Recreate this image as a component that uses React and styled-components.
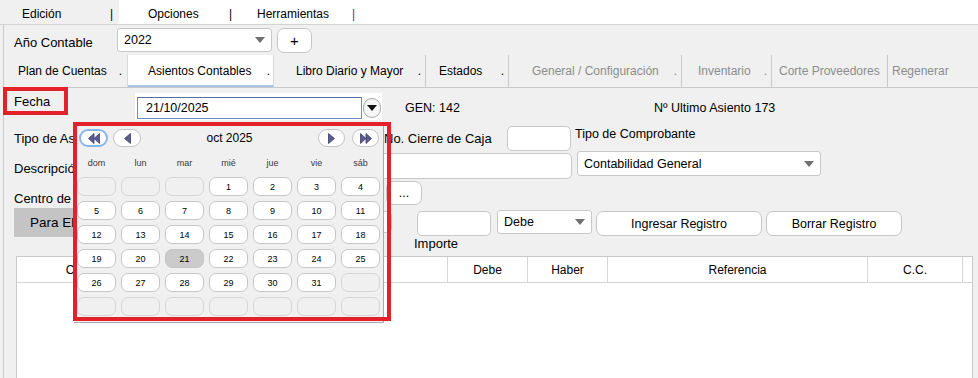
import React from "react";
import styled, { createGlobalStyle } from "styled-components";

const GlobalStyle = createGlobalStyle`
  html, body { margin: 0; padding: 0; background: #fff; }
  body { font-family: "Liberation Sans", Arial, sans-serif; font-size: 13px; color: #000; }
  * { box-sizing: border-box; }
`;

const weekDays = ["dom", "lun", "mar", "mié", "jue", "vie", "sáb"];

const tabs = [
  { title: "Plan de Cuentas", w: 123, pl: 14, pr: 5, dot: true },
  { title: "Asientos Contables", w: 147, pl: 20, pr: 3, dot: true, active: true },
  { title: "Libro Diario y Mayor", w: 152, pl: 22, pr: 4, dot: true, sep: true },
  { title: "Estados", w: 83, pl: 13, pr: 4, dot: true, sep: true },
  { title: "General / Configuración", w: 173, pl: 23, pr: 4, dot: true, sep: true, off: true },
  { title: "Inventario", w: 90, pl: 16, pr: 4, dot: true, sep: true, off: true },
  { title: "Corte Proveedores", w: 116, pl: 7, pr: 0, sep: true, off: true },
  { title: "Regenerar", w: 80, pl: 4, pr: 0, off: true },
];

const columns = [
  { title: "Cuenta", w: 137 },
  { title: "Nombre de la Cuenta", w: 294 },
  { title: "Debe", w: 80 },
  { title: "Haber", w: 80 },
  { title: "Referencia", w: 260 },
  { title: "C.C.", w: 95 },
  { title: "", w: 9, last: true },
];

const buildDays = () => {
  const cells = [];
  for (let i = 0; i < 3; i++) cells.push(null);
  for (let d = 1; d <= 31; d++) cells.push(d);
  while (cells.length < 42) cells.push(null);
  return cells;
};

const ArrowIcon = ({ dir, double }) => {
  const left = dir === "left";
  return (
    <svg width={double ? 12 : 7} height="11" viewBox={double ? "0 0 12 11" : "0 0 7 11"}>
      {double ? (
        left ? (
          <>
            <polygon points="6,0.5 0.5,5.5 6,10.5" fill="#5c5c92" stroke="#3c3c6c" strokeWidth="0.8" />
            <polygon points="11.5,0.5 6,5.5 11.5,10.5" fill="#5c5c92" stroke="#3c3c6c" strokeWidth="0.8" />
          </>
        ) : (
          <>
            <polygon points="0.5,0.5 6,5.5 0.5,10.5" fill="#5c5c92" stroke="#3c3c6c" strokeWidth="0.8" />
            <polygon points="6,0.5 11.5,5.5 6,10.5" fill="#5c5c92" stroke="#3c3c6c" strokeWidth="0.8" />
          </>
        )
      ) : left ? (
        <polygon points="6.5,0.5 0.5,5.5 6.5,10.5" fill="#5c5c92" stroke="#3c3c6c" strokeWidth="0.8" />
      ) : (
        <polygon points="0.5,0.5 6.5,5.5 0.5,10.5" fill="#5c5c92" stroke="#3c3c6c" strokeWidth="0.8" />
      )}
    </svg>
  );
};

const App = () => {
  const days = buildDays();
  return (
    <Page>
      <GlobalStyle />
      <MenuBar>
        <MenuItem $w={119} $pl={22} $pr={6} $active>
          <span>Edición</span>
          <MenuSep>|</MenuSep>
        </MenuItem>
        <MenuItem $w={115} $pl={29} $pr={2}>
          <span>Opciones</span>
          <MenuSep>|</MenuSep>
        </MenuItem>
        <MenuItem $w={123} $pl={23} $pr={2}>
          <span>Herramientas</span>
          <MenuSep $purple>|</MenuSep>
        </MenuItem>
      </MenuBar>

      <Main>
        <Content>
          <Row $h={30} $center>
            <Label $w={103} $mt={5}>Año Contable</Label>
            <Select $w={155} $h={24}>
              <span>2022</span>
              <Caret />
            </Select>
            <Button $w={35} $h={25} $ml={5} $size={15}>+</Button>
          </Row>

          <TabRow>
            {tabs.map((t) => (
              <Tab key={t.title} $w={t.w} $pl={t.pl} $pr={t.pr} $active={t.active} $sep={t.sep} $off={t.off}>
                <span>{t.title}</span>
                {t.dot && <span>.</span>}
              </Tab>
            ))}
          </TabRow>

          <Row $h={34}>
            <Label $w={121} $mt={6}>Fecha</Label>
            <DateBox>
              <DateInput>21/10/2025</DateInput>
              <DropCircle>
                <BlackCaret />
              </DropCircle>
            </DateBox>
            <Info $w={249} $ml={23} $mt={13}>GEN: 142</Info>
            <Info $mt={13}>Nº Ultimo Asiento 173</Info>
          </Row>

          <Row $h={30}>
            <Label $w={370} $mt={9}>Tipo de Asiento</Label>
            <Label $w={123} $mt={9}>No. Cierre de Caja</Label>
            <Field $w={64} $h={25} $mt={4} />
            <Info $ml={4} $mt={5}>Tipo de Comprobante</Info>
          </Row>

          <Row $h={28}>
            <Label $w={121} $mt={9}>Descripción</Label>
            <Field $w={437} $h={26} $mt={1} />
            <Select $w={244} $h={25} $ml={5} $mt={-1}>
              <span>Contabilidad General</span>
              <Caret />
            </Select>
          </Row>

          <Row $h={27}>
            <Label $w={372} $mt={11}>Centro de Costo</Label>
            <Button $w={36} $h={24} $mt={1}>...</Button>
          </Row>

          <Row $h={49}>
            <GrayButton>Para Elegir Cuenta</GrayButton>
            <Field $w={222} $h={22} $ml={6} $mt={4} />
            <ImporteCol>
              <Field $w={74} $h={25} />
              <SubLabel>Importe</SubLabel>
            </ImporteCol>
            <Select $w={95} $h={24} $ml={6} $mt={3}>
              <span>Debe</span>
              <Caret />
            </Select>
            <Button $w={166} $h={25} $ml={4} $mt={4}>Ingresar Registro</Button>
            <Button $w={136} $h={25} $ml={4} $mt={4}>Borrar Registro</Button>
          </Row>

          <Table>
            <HeaderRow>
              {columns.map((c, i) => (
                <HeaderCell key={i} $w={c.w} $last={c.last}>{c.title}</HeaderCell>
              ))}
            </HeaderRow>
          </Table>
        </Content>
      </Main>

      <Popup>
        <NavRow>
          <NavButton $w={29} $focus>
            <ArrowIcon dir="left" double />
          </NavButton>
          <NavButton $w={28} $ml={5}>
            <ArrowIcon dir="left" />
          </NavButton>
          <MonthTitle>oct 2025</MonthTitle>
          <NavButton $w={27}>
            <ArrowIcon dir="right" />
          </NavButton>
          <NavButton $w={27} $ml={7}>
            <ArrowIcon dir="right" double />
          </NavButton>
        </NavRow>
        <DayNames>
          {weekDays.map((d) => (
            <span key={d}>{d}</span>
          ))}
        </DayNames>
        <DayGrid>
          {days.map((d, i) => (
            <DayCell key={i} $empty={d === null} $selected={d === 21}>
              {d}
            </DayCell>
          ))}
        </DayGrid>
      </Popup>

      <Highlight $x={3} $y={87} $w={65} $h={28} />
      <Highlight $x={73} $y={122} $w={318} $h={199} />
    </Page>
  );
};

const Page = styled.div`
  position: relative;
  width: 978px;
  height: 378px;
  overflow: hidden;
  display: flex;
  flex-direction: column;
  background: #fff;
`;

const MenuBar = styled.div`
  display: flex;
  height: 25px;
  flex-shrink: 0;
  border-bottom: 1px solid #d3d3d3;
  background: #fff;
  font-size: 12px;
`;

const MenuItem = styled.div`
  display: flex;
  align-items: center;
  justify-content: space-between;
  width: ${(p) => p.$w}px;
  padding-top: 4px;
  padding-left: ${(p) => p.$pl}px;
  padding-right: ${(p) => p.$pr}px;
  background: ${(p) => (p.$active ? "#f0f0f0" : "transparent")};
`;

const MenuSep = styled.span`
  color: ${(p) => (p.$purple ? "#7a1a8a" : "#000")};
`;

const Main = styled.div`
  flex: 1;
  display: flex;
  background: #f0f0f0;
  padding-left: 3px;
  min-height: 0;
`;

const Content = styled.div`
  flex: 1;
  display: flex;
  flex-direction: column;
  border-left: 1px solid #c9c9c9;
  min-width: 0;
`;

const Row = styled.div`
  display: flex;
  align-items: ${(p) => (p.$center ? "center" : "flex-start")};
  height: ${(p) => p.$h}px;
  flex-shrink: 0;
  padding-left: 10px;
`;

const Label = styled.span`
  width: ${(p) => p.$w}px;
  margin-top: ${(p) => p.$mt || 0}px;
  font-size: 13px;
  line-height: 15px;
  white-space: nowrap;
  flex-shrink: 0;
`;

const Info = styled.span`
  width: ${(p) => (p.$w ? `${p.$w}px` : "auto")};
  margin-left: ${(p) => p.$ml || 0}px;
  margin-top: ${(p) => p.$mt || 0}px;
  font-size: 12.5px;
  line-height: 15px;
  white-space: nowrap;
  flex-shrink: 0;
`;

const Field = styled.div`
  width: ${(p) => p.$w}px;
  height: ${(p) => p.$h}px;
  margin-left: ${(p) => p.$ml || 0}px;
  margin-top: ${(p) => p.$mt || 0}px;
  background: #fff;
  border: 1px solid #c8c8c8;
  border-radius: 5px;
  flex-shrink: 0;
`;

const Select = styled.div`
  display: flex;
  align-items: center;
  justify-content: space-between;
  width: ${(p) => p.$w}px;
  height: ${(p) => p.$h}px;
  margin-left: ${(p) => p.$ml || 0}px;
  margin-top: ${(p) => p.$mt || 0}px;
  padding: 0 6px 0 6px;
  background: #fff;
  border: 1px solid #c8c8c8;
  border-radius: 3px;
  font-size: 12.5px;
  flex-shrink: 0;
`;

const Caret = styled.span`
  width: 0;
  height: 0;
  border-left: 5px solid transparent;
  border-right: 5px solid transparent;
  border-top: 6px solid #707070;
`;

const BlackCaret = styled(Caret)`
  border-top: 6px solid #111;
`;

const Button = styled.button`
  width: ${(p) => p.$w}px;
  height: ${(p) => p.$h}px;
  margin-left: ${(p) => p.$ml || 0}px;
  margin-top: ${(p) => p.$mt || 0}px;
  padding: 0;
  background: #fff;
  border: 1px solid #c6c6c6;
  border-radius: 7px;
  font-family: "Liberation Sans", Arial, sans-serif;
  font-size: ${(p) => p.$size || 12.5}px;
  color: #000;
  flex-shrink: 0;
`;

const TabRow = styled.div`
  display: flex;
  height: 33px;
  flex-shrink: 0;
  border-bottom: 1px solid #c9c9c9;
`;

const Tab = styled.div`
  display: flex;
  align-items: center;
  justify-content: space-between;
  width: ${(p) => p.$w}px;
  padding-left: ${(p) => p.$pl}px;
  padding-right: ${(p) => p.$pr}px;
  font-size: 12px;
  white-space: nowrap;
  flex-shrink: 0;
  color: ${(p) => (p.$off ? "#8c8c8c" : "#000")};
  background: ${(p) => (p.$active ? "#fff" : "transparent")};
  border-left: ${(p) => (p.$active ? "1px solid #d9d9d9" : "none")};
  border-right: ${(p) => (p.$active ? "1px solid #d9d9d9" : p.$sep ? "1px solid #c9c9c9" : "none")};
  box-shadow: ${(p) => (p.$active ? "inset 0 -2px 0 #a7c6e6" : "none")};
`;

const DateBox = styled.div`
  display: flex;
  align-items: flex-start;
  width: 247px;
  height: 27px;
  margin-top: 5px;
  padding: 4px 0 0 2px;
  background: #fff;
  flex-shrink: 0;
`;

const DateInput = styled.div`
  display: flex;
  align-items: center;
  width: 225px;
  height: 22px;
  padding-left: 8px;
  border: 1px solid #6f8fc4;
  border-top-color: #55709e;
  font-size: 12.5px;
`;

const DropCircle = styled.div`
  display: flex;
  align-items: center;
  justify-content: center;
  width: 18px;
  height: 20px;
  margin: 1px 0 0 1px;
  border: 1px solid #a9a9a9;
  border-radius: 10px;
  background: #f6f6f6;
`;

const GrayButton = styled.div`
  display: flex;
  align-items: center;
  width: 150px;
  height: 29px;
  margin-top: 1px;
  padding-left: 16px;
  background: #c4c4c4;
  font-size: 13.5px;
  white-space: nowrap;
  flex-shrink: 0;
`;

const ImporteCol = styled.div`
  display: flex;
  flex-direction: column;
  margin: 4px 0 0 25px;
  flex-shrink: 0;
`;

const SubLabel = styled.span`
  margin: 1px 0 0 -3px;
  font-size: 13px;
  line-height: 14px;
`;

const Table = styled.div`
  flex: 1;
  width: 957px;
  margin-left: 12px;
  background: #fff;
  border: 1px solid #c9c9c9;
  border-bottom: none;
`;

const HeaderRow = styled.div`
  display: flex;
  height: 26px;
  border-bottom: 1px solid #d6d6d6;
`;

const HeaderCell = styled.div`
  display: flex;
  align-items: center;
  justify-content: center;
  width: ${(p) => p.$w}px;
  flex-shrink: 0;
  border-right: ${(p) => (p.$last ? "none" : "1px solid #d6d6d6")};
  font-size: 12px;
  white-space: nowrap;
  overflow: hidden;
`;

const Popup = styled.div`
  position: absolute;
  left: 74px;
  top: 122px;
  width: 310px;
  height: 201px;
  padding: 7px 0 0 3px;
  background: #f0f0f0;
  border-right: 1px solid #a9a9a9;
  border-bottom: 1px solid #a9a9a9;
`;

const NavRow = styled.div`
  display: flex;
  align-items: center;
  height: 18px;
  padding: 0 4px 0 2px;
`;

const NavButton = styled.div`
  display: flex;
  align-items: center;
  justify-content: center;
  width: ${(p) => p.$w}px;
  height: 18px;
  margin-left: ${(p) => p.$ml || 0}px;
  background: #fff;
  border: ${(p) => (p.$focus ? "2px solid #8ab6e6" : "1px solid #c4c4c4")};
  border-radius: 9px;
  flex-shrink: 0;
`;

const MonthTitle = styled.span`
  flex: 1;
  text-align: center;
  font-size: 12px;
`;

const DayNames = styled.div`
  display: grid;
  grid-template-columns: repeat(7, 39px);
  column-gap: 5px;
  height: 16px;
  margin-top: 8px;
  align-items: center;
  font-size: 9px;
  color: #3a3a3a;
  text-align: center;
`;

const DayGrid = styled.div`
  display: grid;
  grid-template-columns: repeat(7, 39px);
  grid-auto-rows: 19px;
  gap: 5px;
  margin-top: 6px;
`;

const DayCell = styled.div`
  display: flex;
  align-items: center;
  justify-content: center;
  border-radius: 7px;
  font-size: 9px;
  border: 1px solid ${(p) => (p.$empty ? "#d6d6d6" : "#c6c6c6")};
  background: ${(p) => (p.$selected ? "#cbcbcb" : p.$empty ? "#f0f0f0" : "#fff")};
`;

const Highlight = styled.div`
  position: absolute;
  left: ${(p) => p.$x}px;
  top: ${(p) => p.$y}px;
  width: ${(p) => p.$w}px;
  height: ${(p) => p.$h}px;
  border: 4px solid #e3212a;
  pointer-events: none;
`;

export default App;
